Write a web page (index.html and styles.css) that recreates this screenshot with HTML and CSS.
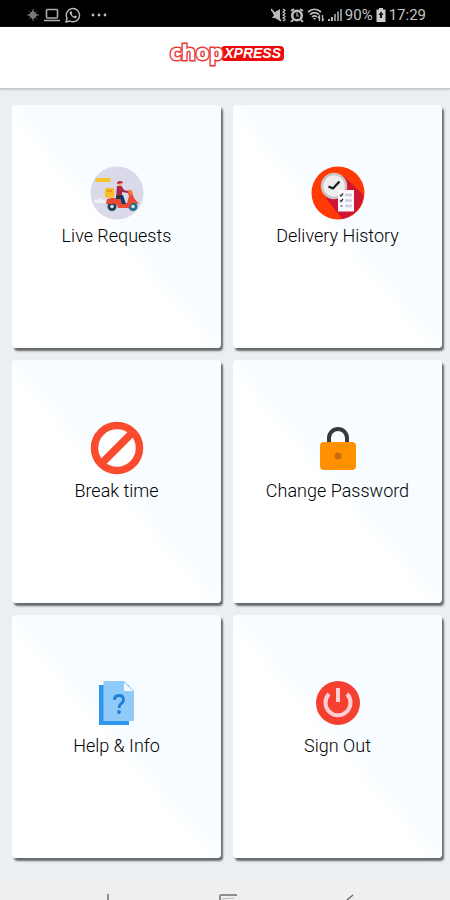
FILE: index.html
```html
<!DOCTYPE html>
<html lang="en">
<head>
<meta charset="utf-8">
<meta name="viewport" content="width=device-width, initial-scale=1">
<title>chopXPRESS</title>
<link rel="stylesheet" href="styles.css">
</head>
<body>
<div class="status">
  <div class="status-group">
    <svg width="12" height="14" viewBox="0 0 12 14" fill="none" stroke="#777"><path d="M6 1v12M0 7h12" /><path d="M6 3l4 4-4 4-4-4z" fill="#777"/><path d="M2 3l8 8M10 3l-8 8" stroke-width=".7"/></svg>
    <svg width="16" height="14" viewBox="0 0 16 14" fill="none" stroke="#aaa" stroke-width="1.6"><rect x="2.5" y="1.5" width="11" height="8.5" rx="1"/><path d="M0 12.5h16"/></svg>
    <svg width="16" height="16" viewBox="0 0 16 16"><path d="M1 15l1.1-3.7A6.6 6.6 0 1 1 4.800 14z" fill="none" stroke="#bbb" stroke-width="1.400"/><path d="M5.500 4.300c-1.500 1-.8 3.300 1.500 5.300 2 1.800 3.900 2.100 4.700.7.300-.7 0-1-1.700-1.700L9 9.500C7.800 9 7 8 6.700 7.200l.7-.9C6.800 4.300 6.300 3.900 5.500 4.300z" fill="#bbb"/></svg>
    <svg class="more" width="16" height="4" viewBox="0 0 16 4" fill="#bbb"><circle cx="2" cy="2" r="1.400"/><circle cx="8" cy="2" r="1.400"/><circle cx="14" cy="2" r="1.400"/></svg>
  </div>
  <div class="status-group status-right">
    <svg width="16" height="14" viewBox="0 0 16 14"><path d="M1 4c1 1 2 1 3 0l5-3v12l-5-3H1l2-3z" fill="#bbb"/><path d="M0 1l10 12" stroke="#bbb" stroke-width="1.500"/><path d="M12 1l2 1.500-2 1.500 2 1.500L12 7l2 1.500-2 1.500 2 1.500-2 1.500" fill="none" stroke="#bbb" stroke-width="1.300"/></svg>
    <svg width="14" height="14" viewBox="0 0 14 14" fill="none" stroke="#bbb" stroke-width="2.600"><circle cx="7" cy="7.500" r="4.800"/><path d="M1 3l3-2M13 3l-3-2M3 12l-2 2M11 12l2 2" stroke-width="2"/><path d="M7 4.500V8h2" stroke-width="1.200"/></svg>
    <svg width="18" height="14" viewBox="0 0 18 14" fill="none" stroke="#bbb" stroke-width="1.700"><path d="M1 4c4-3.500 9-3.500 13 0M3 6.500c3-2.600 6-2.600 9 0M5 9c1.600-1.500 3.400-1.500 5 0"/><path d="M6 10h3l-1.500 2z" fill="#bbb" stroke="none"/><path d="M12.500 13V8l-1.500 2M15.500 7v5.500L17 11" stroke-width="1.300"/></svg>
    <svg width="14" height="14" viewBox="0 0 14 14"><path d="M0 11h2v2H0zM3 9h2v4H3z" fill="#bbb"/><path d="M6 6h2v7H6zM9 3.500h2V13H9zM12 1h2v12h-2z" fill="#888"/></svg>
    <span class="battery">90%</span>
    <svg width="10" height="14" viewBox="0 0 10 14"><path d="M3 0h4v1.500h2.500V14h-9V1.500H3z" fill="#ccc"/><path d="M5 3.500L2.500 7H4v3h2V7h1.500z" fill="#111"/></svg>
    <time>17:29</time>
  </div>
</div>

<header class="header">
  <h1 class="logo"><span class="logo-chop">chop</span><span class="logo-xpress">XPRESS</span></h1>
</header>

<main class="grid">
  <button class="card" type="button">
    <svg class="icon" viewBox="0 0 54 54">
      <circle cx="27" cy="27" r="26.500" fill="#dad9e9"/>
      <path d="M5 12h16l-1 4H6z" fill="#f7c331"/>
      <path d="M4 35q1-3 4-1 3-4 5 0 3 0 3 3H5z" fill="#efeff8"/>
      <rect x="15" y="22" width="9" height="9.500" fill="#f9bd22"/><path d="M17 25h5" stroke="#e58b18" stroke-width="1.500"/>
      <path d="M17 33h10v5H17z" fill="#c93445"/>
      <circle cx="22" cy="40.500" r="4.500" fill="#23405b"/><circle cx="22" cy="40.500" r="1.800" fill="#d5e5ee"/>
      <circle cx="43" cy="40.500" r="4.500" fill="#23708a"/><circle cx="43" cy="40.500" r="1.800" fill="#d5e5ee"/>
      <path d="M16 38q0-6 5-6h8l3 5h5l2-7-2-5 4-1 3 8 5 6-5-1q-4 0-5 5H28q-1-5-6-4z" fill="#e94a35"/>
      <path d="M38 24l4 1 1 3-3 1z" fill="#f57a36"/>
      <path d="M27 20l4-1 3 5 4 1v2l-6-1v4l-6 1z" fill="#aa2847"/>
      <path d="M26 30l7-1 3 9h-4l-2-5h-4z" fill="#183758"/>
      <circle cx="30" cy="18" r="2.200" fill="#eeb38c"/><path d="M27 18q0-3 3-3 3 0 3 2z" fill="#c52336"/>
    </svg>
    <span>Live Requests</span>
  </button>
  <button class="card" type="button">
    <svg class="icon" viewBox="0 0 54 54">
      <circle cx="27" cy="27" r="26.500" fill="#ff3a05"/>
      <path d="M32 9.500L49.500 26q4 3 2 9A26.500 26.500 0 0 1 31 53L15 32z" fill="#ce1532"/>
      <circle cx="23" cy="20" r="12" fill="#eee" stroke="#c9c4c1" stroke-width="2.500"/>
      <path d="M17.500 20.500l4.500 2 6.500-7" fill="none" stroke="#171717" stroke-width="2.200"/>
      <rect x="27" y="24" width="16" height="21.500" fill="#faf7fd"/>
      <path d="M34 29h7M34 34.500h7M34 40h7" stroke="#cfcce2" stroke-width="2.500"/>
      <path d="M29 29l1 1 2-2.500M29 34.500l1 1 2-2.500" stroke="#333" fill="none" stroke-width="1.300"/><circle cx="30.500" cy="40" r="1" fill="#777"/>
    </svg>
    <span>Delivery History</span>
  </button>
  <button class="card" type="button">
    <svg class="icon" viewBox="0 0 54 54" fill="none" stroke="#fb4b2f" stroke-width="7.500"><circle cx="27" cy="27" r="22.500" fill="#fff"/><path d="M11.500 42.500l31-31"/></svg>
    <span>Break time</span>
  </button>
  <button class="card" type="button">
    <svg class="icon" viewBox="0 0 54 54">
      <path d="M18 24v-7a9 9 0 0 1 18 0v7" fill="none" stroke="#343a3f" stroke-width="4"/>
      <rect x="9" y="21" width="36" height="28" rx="4" fill="#ff9100"/><circle cx="27" cy="35" r="3.500" fill="#c87010"/>
    </svg>
    <span>Change Password</span>
  </button>
  <button class="card" type="button">
    <svg class="icon" viewBox="0 0 54 54">
      <path d="M9 9h30v40H9z" fill="#2e98f0"/>
      <path d="M13.500 5H34l10 10v30H13.500z" fill="#90caf9"/><path d="M34 6.500V15h9z" fill="#f3fbff"/>
      <path d="M24.500 24q0-4.500 4.500-4.500t4.500 4.200q0 2.300-2.300 4-2.200 1.600-2.200 4.300" fill="none" stroke="#1c80d8" stroke-width="2.800"/><circle cx="29" cy="36" r="1.900" fill="#1c80d8"/>
    </svg>
    <span>Help &amp; Info</span>
  </button>
  <button class="card" type="button">
    <svg class="icon" viewBox="0 0 54 54">
      <circle cx="27" cy="27" r="22" fill="#f6402f"/>
      <path d="M18 18a12.500 12.500 0 1 0 18 0" fill="none" stroke="#ffcfd6" stroke-width="4"/><path d="M27 12v14" stroke="#ffcfd6" stroke-width="4"/>
    </svg>
    <span>Sign Out</span>
  </button>
</main>

<nav class="navbar" aria-label="System">
  <svg width="18" height="6" viewBox="0 0 18 6" fill="none" stroke="#6e6e6e" stroke-width="1.500"><path d="M10 0v6"/></svg>
  <svg width="18" height="6" viewBox="0 0 18 6" fill="none" stroke="#6e6e6e" stroke-width="1.500"><path d="M1 6V2q0-1 1-1h16"/><path d="M3 5l12-1" stroke="#aaa" stroke-width=".8"/></svg>
  <svg width="18" height="6" viewBox="0 0 18 6" fill="none" stroke="#6e6e6e" stroke-width="1.500"><path d="M7 6l6-5"/></svg>
</nav>
</body>
</html>
```
FILE: styles.css
```css
* {
  box-sizing: border-box;
}

body {
  margin: 0;
  min-height: 100vh;
  display: flex;
  flex-direction: column;
  background: #ebeff2;
  font-family: Roboto, sans-serif;
  color: #222;
}

svg {
  display: block;
  flex: none;
}

.status {
  display: flex;
  justify-content: space-between;
  align-items: center;
  height: 27px;
  padding: 2px 24px 0 27px;
  background: #000;
  color: #c4c4c4;
  font-size: 15px;
  line-height: 20px;
}

.status-group {
  display: flex;
  align-items: center;
  gap: 5px;
}

.status-right {
  gap: 3px;
}

.more {
  margin-left: 5px;
}

.header {
  display: flex;
  justify-content: center;
  height: 62px;
  padding: 8px 0 0 4px;
  background: #fff;
  border-bottom: 1px solid #c4c5c6;
  box-shadow: 0 1px 2px #c8caca;
}

.logo {
  display: flex;
  align-items: center;
  height: 32px;
  margin: 0;
}

.logo-chop {
  z-index: 1;
  color: #fff;
  font: 700 22px/28px "Open Sans", sans-serif;
  -webkit-text-stroke: 3px #e83c3c;
  paint-order: stroke fill;
}

.logo-xpress {
  margin: 5px 0 0 -2px;
  padding: 0 3px 0 3px;
  border-radius: 4px;
  background: #ee0d0d;
  color: #fff;
  font: italic 700 14px/15px "Liberation Sans", sans-serif;
}

.grid {
  flex: 1;
  display: grid;
  grid-template-columns: 1fr 1fr;
  grid-auto-rows: 243px;
  gap: 12px;
  padding: 16px 8px 22px 12px;
}

.card {
  display: flex;
  flex-direction: column;
  align-items: center;
  gap: 6px;
  padding: 61px 0 0;
  border: 0;
  border-radius: 4px;
  background: linear-gradient(to top right, #fff 46%, #f6fcff 54%);
  box-shadow: 2px 3px 2px #666a6d;
  color: #000;
  font: 300 18px/20px Roboto, sans-serif;
  cursor: pointer;
}

.icon {
  width: 54px;
  height: 54px;
}

.navbar {
  display: flex;
  justify-content: space-around;
  align-items: flex-end;
  height: 20px;
  padding: 0 41px 0 46px;
  background: #efefef;
}
```
